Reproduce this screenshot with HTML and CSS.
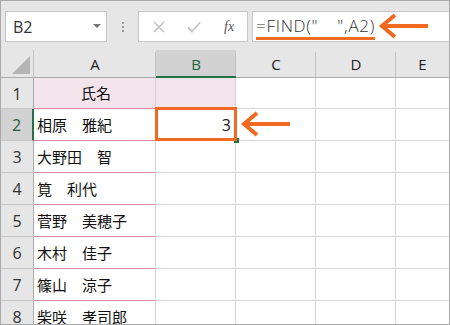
FILE: index.html
```html
<!DOCTYPE html>
<html lang="ja">
<head>
<meta charset="utf-8">
<link rel="stylesheet" href="styles.css">
</head>
<body>
<div class="frame">
  <div class="toolbar">
    <div class="namebox">
      <span class="ref">B2</span>
      <svg class="dd" width="8" height="4" viewBox="0 0 8 4"><path d="M0 0H8L4 4Z" fill="#777"/></svg>
    </div>
    <div class="grip"><i></i><i></i><i></i></div>
    <div class="iconbox">
      <svg class="ic" width="12" height="12" viewBox="0 0 12 12"><path d="M1 1L11 11M11 1L1 11" stroke="#c4c4c4" stroke-width="1.6" fill="none"/></svg>
      <svg class="ic" width="14" height="12" viewBox="0 0 14 12"><path d="M1 6.5L5 10.5L13 1.5" stroke="#c4c4c4" stroke-width="1.8" fill="none"/></svg>
      <span class="fx">fx</span>
    </div>
    <div class="formula"><span class="ftext">=FIND("<span class="wsp">　</span>",A2)</span></div>
  </div>
  <div class="sheet">
    <div class="corner"><svg width="18" height="18" viewBox="0 0 18 18"><path d="M18 0V18H0Z" fill="#b5b5b5"/></svg></div>
    <div class="ch">A</div>
    <div class="ch ch-sel">B</div>
    <div class="ch">C</div>
    <div class="ch">D</div>
    <div class="ch ch-last">E</div>

    <div class="rh r1">1</div>
    <div class="c a r1 pink center">氏名</div>
    <div class="c r1 pink bpink">&nbsp;</div>
    <div class="c r1"></div><div class="c r1"></div><div class="c r1 last"></div>

    <div class="rh rh-sel">2</div>
    <div class="c a">相原　雅紀</div>
    <div class="c num active">3</div>
    <div class="c"></div><div class="c"></div><div class="c last"></div>

    <div class="rh">3</div>
    <div class="c a">大野田　智</div>
    <div class="c"></div><div class="c"></div><div class="c"></div><div class="c last"></div>

    <div class="rh">4</div>
    <div class="c a">筧　利代</div>
    <div class="c"></div><div class="c"></div><div class="c"></div><div class="c last"></div>

    <div class="rh">5</div>
    <div class="c a">菅野　美穂子</div>
    <div class="c"></div><div class="c"></div><div class="c"></div><div class="c last"></div>

    <div class="rh">6</div>
    <div class="c a">木村　佳子</div>
    <div class="c"></div><div class="c"></div><div class="c"></div><div class="c last"></div>

    <div class="rh">7</div>
    <div class="c a">篠山　涼子</div>
    <div class="c"></div><div class="c"></div><div class="c"></div><div class="c last"></div>

    <div class="rh">8</div>
    <div class="c a">柴咲　孝司郎</div>
    <div class="c"></div><div class="c"></div><div class="c"></div><div class="c last"></div>
  </div>
  <svg class="arrow arrow-top" width="52" height="26" viewBox="0 0 52 26"><path d="M50 13H4M17 2L4 13L17 24" stroke="#f26a21" stroke-width="4" fill="none"/></svg>
  <svg class="arrow arrow-cell" width="52" height="26" viewBox="0 0 52 26"><path d="M50 13H4M17 2L4 13L17 24" stroke="#f26a21" stroke-width="4" fill="none"/></svg>
</div>
</body>
</html>
```

FILE: styles.css
```css
* { box-sizing: border-box; }
html, body { margin: 0; padding: 0; }
body {
  width: 450px;
  height: 325px;
  overflow: hidden;
  font-family: "Noto Sans", "Noto Sans CJK JP", sans-serif;
  background: #fff;
}
.frame {
  position: relative;
  width: 450px;
  height: 325px;
  border: 1px solid #a9a9a9;
  background: #e6e6e6;
  overflow: hidden;
}
.toolbar {
  height: 49px;
  display: flex;
  align-items: flex-start;
  padding: 10px 0 0 4px;
}
.namebox {
  width: 102px;
  height: 31px;
  background: #fff;
  border: 1px solid #c6c6c6;
  display: flex;
  align-items: center;
  justify-content: space-between;
  padding: 0 5px 0 7px;
}
.ref {
  font-family: "Open Sans", "Noto Sans", sans-serif;
  font-size: 16px;
  color: #333;
  margin-top: 1px;
}
.dd { margin-top: -2px; }
.grip {
  width: 31px;
  height: 31px;
  display: flex;
  flex-direction: column;
  align-items: center;
  justify-content: center;
  gap: 2px;
}
.grip i {
  display: block;
  width: 2px;
  height: 2px;
  background: #9a9a9a;
}
.iconbox {
  width: 110px;
  height: 31px;
  background: #fff;
  border: 1px solid #c6c6c6;
  display: flex;
  align-items: center;
  padding-left: 14px;
  gap: 22px;
}
.fx {
  font-family: "Liberation Serif", "DejaVu Serif", serif;
  font-style: italic;
  font-size: 14px;
  color: #555;
  margin-left: 1px;
}
.formula {
  flex: 1;
  height: 31px;
  margin-left: 4px;
  margin-right: -4px;
  background: #fff;
  border: 1px solid #c6c6c6;
  padding: 3px 0 0 3px;
}
.ftext {
  display: inline-block;
  font-family: "Open Sans", "Noto Sans", "Noto Sans CJK JP", sans-serif;
  font-size: 17px;
  font-weight: 300;
  line-height: 20px;
  color: #333;
  letter-spacing: 0.7px;
  padding: 0 0 1px 0;
  border-bottom: 3px solid #f26a21;
}
.wsp {
  display: inline-block;
  width: 19px;
}
.sheet {
  display: grid;
  grid-template-columns: 33px 122px 80px 80px 80px 1fr;
  grid-template-rows: 28px 31px repeat(7, 32px);
  background: #fff;
}
.corner {
  background: #e6e6e6;
  border-right: 1px solid #c3c3c3;
  border-bottom: 1px solid #ababab;
  display: flex;
  align-items: flex-end;
  justify-content: flex-end;
  padding: 0 3px 3px 0;
}
.ch {
  background: #e6e6e6 linear-gradient(#c2c2c2, #c2c2c2) right 2px / 1px 25px no-repeat;
  border-bottom: 1px solid #ababab;
  display: flex;
  align-items: center;
  justify-content: center;
  font-family: "Open Sans", "Noto Sans", sans-serif;
  font-size: 15px;
  color: #222;
  padding-top: 1px;
}
.ch-last { background-image: none; }
.ch-sel {
  background-color: #d2d2d2;
  border-bottom: 2px solid #217346;
  color: #1f5c3a;
}
.rh {
  background: #e6e6e6;
  border-right: 1px solid #ababab;
  border-bottom: 1px solid #c8c8c8;
  display: flex;
  align-items: center;
  justify-content: center;
  font-family: "Open Sans", "Noto Sans", sans-serif;
  font-size: 16px;
  line-height: 18px;
  color: #333;
  padding-top: 1px;
}
.rh-sel {
  background: #d2d2d2;
  border-right: 2px solid #217346;
  color: #1f5c3a;
}
.c {
  border-right: 1px solid #d4d4d4;
  border-bottom: 1px solid #d4d4d4;
  display: flex;
  align-items: center;
  font-family: "Noto Sans CJK JP", sans-serif;
  font-size: 15px;
  line-height: 18px;
  color: #111;
  padding: 0 0 0 3px;
  white-space: nowrap;
}
.c.last { border-right: none; }
.c.a { border-bottom-color: #d48aa6; }
.c.pink { background: #f2e4ea; }
.c.bpink { border-bottom-color: #d48aa6; }
.c.center { justify-content: center; }
.c.num {
  justify-content: flex-end;
  padding: 1px 4px 0 0;
  font-family: "Open Sans", "Noto Sans", sans-serif;
  font-size: 16px;
  color: #222;
}
.active { position: relative; }
.active::before {
  content: "";
  position: absolute;
  right: -4px;
  bottom: -3px;
  width: 5px;
  height: 5px;
  background: #217346;
}
.active::after {
  content: "";
  position: absolute;
  left: -1px;
  top: -2px;
  right: -2px;
  bottom: -1px;
  border: 3px solid #f26a21;
}
.arrow { position: absolute; }
.arrow-top { left: 377px; top: 12px; }
.arrow-cell { left: 239px; top: 110px; }
```
